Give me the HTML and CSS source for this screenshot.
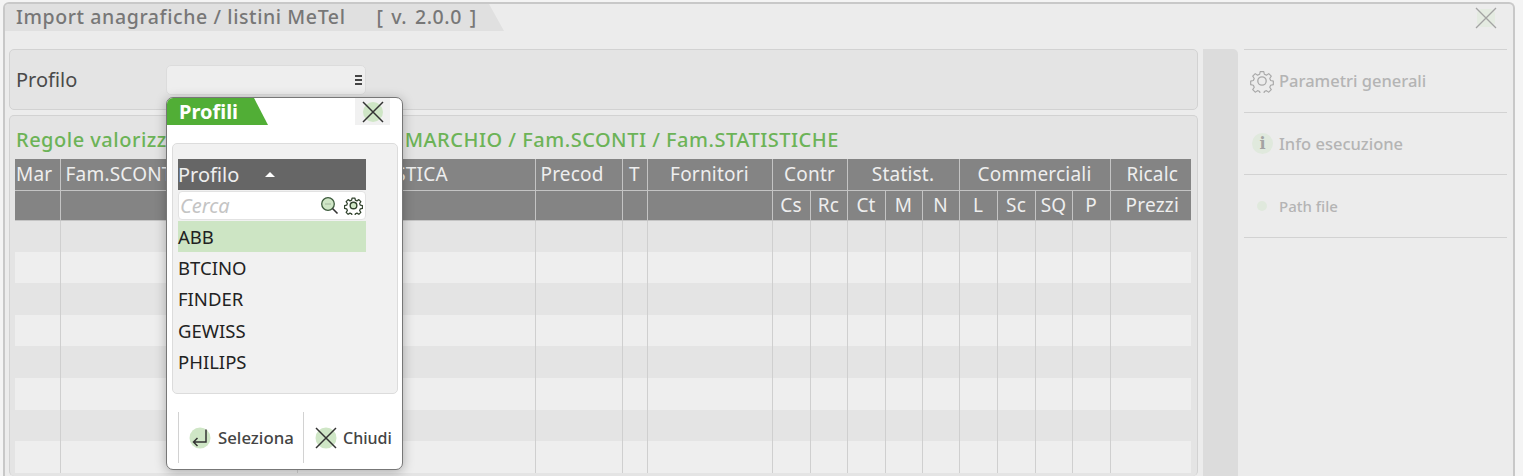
FILE: index.html
```html
<!DOCTYPE html>
<html lang="it">
<head>
  <meta charset="UTF-8">
  <title>Import anagrafiche / listini MeTel</title>
  <link rel="stylesheet" href="styles.css">
</head>
<body>
  <div class="window">
    <div class="window-head">
      <div class="window-tab"><span class="tab-title">Import anagrafiche / listini MeTel</span><span class="version">[ v. 2.0.0 ]</span></div>
      <button class="window-close">
        <svg width="22" height="22" viewBox="0 0 22 22"><rect x="2" y="2" width="18" height="18" rx="5" fill="#e4ebe1"/><path d="M1 1L21 21M21 1L1 21" stroke="#a3a3a3" stroke-width="1.300" fill="none"/></svg>
      </button>
    </div>

    <div class="window-body">
      <div class="main">
        <div class="panel panel-profile">
          <label class="field-label">Profilo</label>
          <div class="select"><span class="select-icon"></span></div>
        </div>

        <div class="panel panel-rules">
          <h2 class="rules-title">Regole valorizzazione dati articolo per MARCHIO / Fam.SCONTI / Fam.STATISTICHE</h2>
          <table class="grid">
            <colgroup>
              <col class="c45"><col class="c237"><col class="c238"><col class="c87"><col class="c25"><col class="c125">
              <col class="c38"><col class="c37"><col class="c38"><col class="c37"><col class="c37">
              <col class="c38"><col class="c38"><col class="c37"><col class="c38"><col class="c81">
            </colgroup>
            <thead>
              <tr>
                <th class="left">Mar</th><th class="left">Fam.SCONTI</th><th class="left">Fam.STATISTICA</th><th class="left">Precod</th><th>T</th><th>Fornitori</th>
                <th colspan="2">Contr</th><th colspan="3">Statist.</th><th colspan="4">Commerciali</th><th>Ricalc</th>
              </tr>
              <tr>
                <th></th><th></th><th></th><th></th><th></th><th></th>
                <th>Cs</th><th>Rc</th><th>Ct</th><th>M</th><th>N</th><th>L</th><th>Sc</th><th>SQ</th><th>P</th><th>Prezzi</th>
              </tr>
            </thead>
            <tbody id="grid-rows"></tbody>
          </table>
        </div>
      </div>

      <div class="scroll-strip"></div>

      <div class="side">
        <div class="side-item">
          <svg class="side-icon" width="24" height="24" viewBox="0 0 24 24" fill="none" stroke="#a9a9a9" stroke-width="1.300"><path d="M10 1.500h4l.6 3 2.300 1 2.600-1.700 2.800 2.800-1.700 2.600 1 2.300 3 .6v4l-3 .6-1 2.300 1.700 2.600-2.800 2.800-2.600-1.700-2.300 1-.6 3h-4l-.6-3-2.300-1-2.600 1.700-2.800-2.800 1.700-2.600-1-2.300-3-.6v-4l3-.6 1-2.300-1.700-2.600 2.800-2.800 2.600 1.700 2.300-1z" transform="translate(1.200 1.200) scale(.9)" stroke-linejoin="round"/><circle cx="12" cy="12" r="4.200"/></svg>
          <span>Parametri generali</span>
        </div>
        <div class="side-item">
          <span class="info-icon">i</span>
          <span>Info esecuzione</span>
        </div>
        <div class="side-item">
          <span class="dot-icon"></span>
          <span class="path-label">Path file</span>
        </div>
      </div>
    </div>
  </div>

  <div class="popup">
    <div class="popup-head">
      <div class="popup-tab">Profili</div>
      <button class="popup-close">
        <svg width="22" height="22" viewBox="0 0 22 22"><circle cx="11" cy="11" r="10" fill="#cfe6c6"/><path d="M1 1L21 21M21 1L1 21" stroke="#333" stroke-width="1.500" fill="none"/></svg>
      </button>
    </div>
    <div class="popup-panel">
      <div class="list-head"><span>Profilo</span><span class="sort-arrow"></span></div>
      <div class="search">
        <span class="search-text">Cerca</span>
        <svg width="19" height="19" viewBox="0 0 19 19" fill="none"><circle cx="8" cy="8" r="6.300" fill="#cfe6c6" stroke="#3c5a3c" stroke-width="1.300"/><path d="M12.500 12.500L17.500 17.500" stroke="#333" stroke-width="1.600"/><path d="M5.500 8h5" stroke="#7a8a7a" stroke-dasharray="1 1"/></svg>
        <svg width="19" height="19" viewBox="0 0 24 24" fill="#fff" stroke="#33452f" stroke-width="1.800"><path d="M10 1.500h4l.6 3 2.300 1 2.600-1.700 2.800 2.800-1.700 2.600 1 2.300 3 .6v4l-3 .6-1 2.300 1.700 2.600-2.800 2.800-2.600-1.700-2.300 1-.6 3h-4l-.6-3-2.300-1-2.600 1.700-2.800-2.800 1.700-2.600-1-2.300-3-.6v-4l3-.6 1-2.300-1.700-2.600 2.800-2.800 2.600 1.700 2.300-1z" transform="translate(1.200 1.200) scale(.9)" stroke-linejoin="round"/><circle cx="12" cy="12" r="4.200" fill="#cfe6c6"/></svg>
      </div>
      <ul class="list">
        <li class="selected">ABB</li>
        <li>BTCINO</li>
        <li>FINDER</li>
        <li>GEWISS</li>
        <li>PHILIPS</li>
      </ul>
    </div>
    <div class="popup-foot">
      <div class="foot-btn foot-select">
        <svg width="22" height="22" viewBox="0 0 22 22" fill="none"><circle cx="11" cy="11" r="10.500" fill="#cfe6c6"/><path d="M17 2.500V15H4.500M8.500 11L4.500 15L8.500 19" stroke="#333" stroke-width="1.500"/></svg>
        <span>Seleziona</span>
      </div>
      <div class="foot-btn foot-close">
        <svg width="22" height="22" viewBox="0 0 22 22"><circle cx="11" cy="11" r="10.500" fill="#cfe6c6"/><path d="M1 1L21 21M21 1L1 21" stroke="#333" stroke-width="1.500" fill="none"/></svg>
        <span>Chiudi</span>
      </div>
    </div>
  </div>

  <script>
    // righe vuote della griglia
    var body = document.getElementById('grid-rows');
    for (var i = 0; i < 8; i++) {
      var row = document.createElement('tr');
      for (var j = 0; j < 16; j++) {
        row.appendChild(document.createElement('td'));
      }
      body.appendChild(row);
    }
  </script>
</body>
</html>
```

FILE: styles.css
```css
* {
  box-sizing: border-box;
}

html, body {
  height: 100%;
  overflow: hidden;
}

body {
  margin: 0;
  padding: 2px 8px 0 3px;
  background-color: #f4f4f4;
  font-family: "Noto Sans", "Open Sans", sans-serif;
  color: #444;
}

button {
  border: none;
  padding: 0;
  background: none;
}

.window {
  display: flex;
  flex-direction: column;
  height: 474px;
  overflow: hidden;
  background-color: #ececec;
  border: 2px solid #c8c8c8;
  border-bottom: none;
  border-radius: 6px 6px 0 0;
}

.window-head {
  display: flex;
  flex: none;
  justify-content: space-between;
  height: 45px;
}

.window-tab {
  width: 499px;
  height: 27px;
  padding-left: 11px;
  background-color: #e0e0e0;
  clip-path: polygon(0 0, 484px 0, 100% 100%, 0 100%);
  color: #777;
  font-size: 19.500px;
  font-weight: 500;
  line-height: 26px;
  white-space: nowrap;
}

.tab-title {
  letter-spacing: 0.6px;
}

.version {
  margin-left: 31px;
  letter-spacing: 0.6px;
  word-spacing: 2px;
}

.window-close {
  width: 22px;
  height: 22px;
  margin: 3px 16px 0 0;
}

.window-body {
  display: flex;
  flex: 1;
  min-height: 0;
  padding-left: 4px;
}

.main {
  display: flex;
  flex-direction: column;
  width: 1189px;
}

.panel {
  background-color: #e4e4e4;
  border: 1px solid #d2d2d2;
  border-radius: 5px;
}

.panel-profile {
  display: flex;
  flex: none;
  align-items: center;
  height: 61px;
  margin-bottom: 5px;
  padding-left: 6px;
}

.field-label {
  width: 150px;
  font-size: 20px;
  color: #4a4a4a;
}

.select {
  display: flex;
  align-items: center;
  justify-content: flex-end;
  width: 200px;
  height: 30px;
  padding-right: 3px;
  background-color: #eee;
  border: 1px solid #dcdcdc;
  border-radius: 5px;
}

.select-icon {
  width: 7px;
  height: 10px;
  border-top: 2px solid #444;
  border-bottom: 2px solid #444;
  background: linear-gradient(#444, #444) center / 100% 2px no-repeat;
}

.panel-rules {
  flex: 1;
  min-height: 0;
  overflow: hidden;
  padding: 0 5px;
  border-bottom: none;
}

.rules-title {
  height: 43px;
  margin: 0 0 0 1px;
  color: #6cb357;
  font-size: 20px;
  font-weight: 500;
  letter-spacing: 0.5px;
  line-height: 48px;
  white-space: nowrap;
}

.grid {
  width: 1176px;
  table-layout: fixed;
  border-collapse: collapse;
}

.c45 { width: 45px; }
.c237 { width: 237px; }
.c238 { width: 238px; }
.c87 { width: 87px; }
.c25 { width: 25px; }
.c125 { width: 125px; }
.c38 { width: 38px; }
.c37 { width: 37px; }
.c81 { width: 81px; }

.grid th {
  height: 31px;
  padding: 0;
  background-color: #848484;
  border: 1px solid #c4c4c4;
  border-top: none;
  color: #eee;
  font-size: 19px;
  font-weight: 400;
  letter-spacing: 0.2px;
  white-space: nowrap;
  overflow: hidden;
}

.grid thead tr:last-child th {
  height: 30px;
}

.grid th:first-child {
  border-left: none;
}

.grid th:last-child,
.grid td:last-child {
  border-right: none;
}

.grid th:last-child {
  padding-left: 3px;
}

.grid th.left {
  padding-left: 5px;
  text-align: left;
}

.grid thead tr:first-child th.left:first-child {
  padding-left: 1px;
}

.grid td {
  height: 31.600px;
  padding: 0;
  border-left: 1px solid #cfcfcf;
  border-right: 1px solid #cfcfcf;
}

.grid td:first-child {
  border-left: none;
}

.grid tbody tr:nth-child(even) {
  background-color: #eeeeee;
}

.scroll-strip {
  width: 35px;
  margin-left: 5px;
  background-color: #dcdcdc;
  border-radius: 0 5px 0 0;
}

.side {
  width: 263px;
  margin-left: 6px;
  border-top: 1px solid #d2d2d2;
}

.side-item {
  display: flex;
  align-items: center;
  gap: 5px;
  height: 62.700px;
  padding-left: 6px;
  border-bottom: 1px solid #d2d2d2;
  color: #b4b4b4;
  font-size: 16.500px;
  font-weight: 500;
}

.side-icon {
  flex: none;
}

.path-label {
  font-size: 15px;
}

.info-icon {
  width: 21px;
  height: 21px;
  margin: 0 1px 0 2px;
  background-color: #e0e9dd;
  border-radius: 50%;
  color: #a3a3a3;
  font-family: "DejaVu Serif", serif;
  font-size: 16px;
  font-weight: 700;
  line-height: 21px;
  text-align: center;
}

.dot-icon {
  width: 10px;
  height: 10px;
  margin: 0 7px;
  background-color: #e0e9dd;
  border-radius: 50%;
}

.popup {
  position: absolute;
  left: 166px;
  top: 97px;
  width: 237px;
  height: 373px;
  background-color: #fff;
  border: 1px solid #777;
  border-radius: 7px;
  box-shadow: 0 2px 12px rgba(0, 0, 0, 0.28);
  overflow: hidden;
}

.popup-head {
  display: flex;
  justify-content: space-between;
  height: 45px;
}

.popup-tab {
  width: 101px;
  height: 27px;
  padding-left: 12px;
  background-color: #51ae36;
  clip-path: polygon(0 0, 87px 0, 100% 100%, 0 100%);
  color: #fff;
  font-size: 20px;
  font-weight: 700;
  line-height: 27px;
}

.popup-close {
  display: flex;
  align-items: center;
  justify-content: center;
  width: 35px;
  height: 27px;
  margin-right: 12px;
  background-color: #f1f1f1;
}

.popup-panel {
  height: 251px;
  margin: 0 4px 0 5px;
  padding: 15px 5px 0;
  background-color: #f1f1f1;
  border: 1px solid #dcdcdc;
  border-radius: 5px;
}

.list-head {
  display: flex;
  align-items: center;
  width: 188px;
  height: 31px;
  background-color: #666;
  color: #eee;
  font-size: 20px;
}

.sort-arrow {
  margin-left: 26px;
  border-left: 5px solid transparent;
  border-right: 5px solid transparent;
  border-bottom: 5px solid #fff;
}

.search {
  display: flex;
  align-items: center;
  gap: 5px;
  width: 188px;
  height: 29px;
  margin-top: 1px;
  padding: 0 2px 0 1px;
  background-color: #fff;
  border: 1px solid #e2e2e2;
  border-radius: 4px;
}

.search-text {
  flex: 1;
  color: #c4c4c4;
  font-size: 20px;
  font-style: italic;
}

.list {
  width: 188px;
  margin: 1px 0 0;
  padding: 0;
  list-style: none;
}

.list li {
  height: 31.200px;
  color: #222;
  font-size: 18.500px;
  line-height: 31px;
}

.list li.selected {
  background-color: #cde5c4;
}

.popup-foot {
  display: flex;
  margin: 18px 0 0 11px;
}

.foot-btn {
  display: flex;
  align-items: center;
  height: 51px;
  border-left: 1px solid #d2d2d2;
  color: #444;
  font-size: 16px;
  font-weight: 500;
}

.foot-select {
  gap: 7px;
  width: 125px;
  padding-left: 10px;
  font-size: 16.800px;
}

.foot-close {
  gap: 6px;
  padding-left: 11px;
}
```
